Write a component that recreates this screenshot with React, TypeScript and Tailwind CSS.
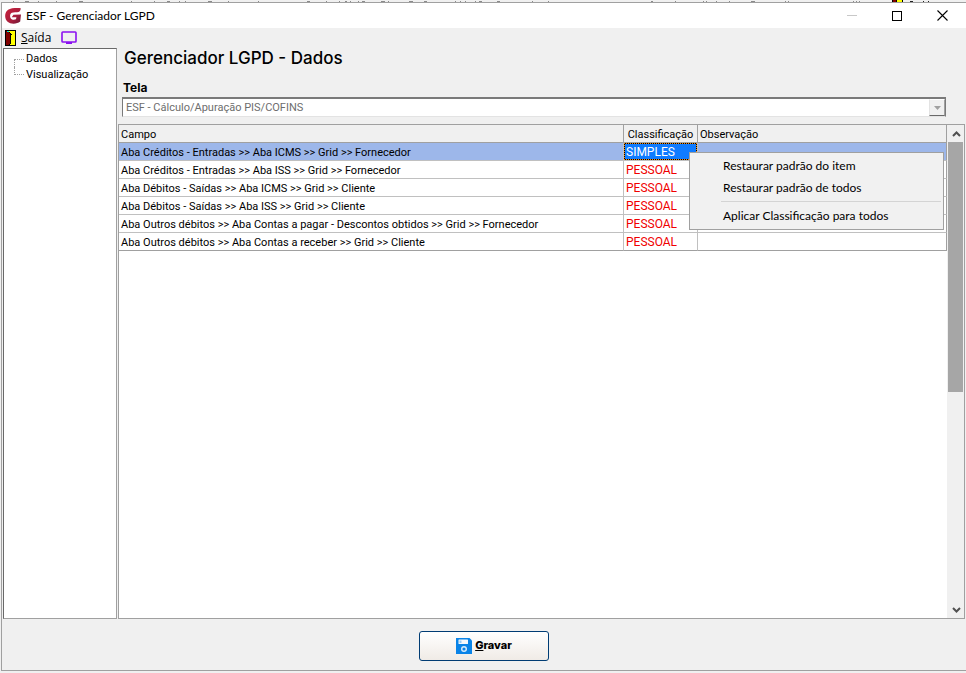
type GridRow = {
  campo: string;
  classificacao: string;
};

const treeItems = ["Dados", "Visualização"];

const rows: GridRow[] = [
  { campo: "Aba Créditos - Entradas >> Aba ICMS >> Grid >> Fornecedor", classificacao: "SIMPLES" },
  { campo: "Aba Créditos - Entradas >> Aba ISS >> Grid >> Fornecedor", classificacao: "PESSOAL" },
  { campo: "Aba Débitos - Saídas >> Aba ICMS >> Grid >> Cliente", classificacao: "PESSOAL" },
  { campo: "Aba Débitos - Saídas >> Aba ISS >> Grid >> Cliente", classificacao: "PESSOAL" },
  { campo: "Aba Outros débitos >> Aba Contas a pagar - Descontos obtidos >> Grid >> Fornecedor", classificacao: "PESSOAL" },
  { campo: "Aba Outros débitos >> Aba Contas a receber >> Grid >> Cliente", classificacao: "PESSOAL" },
];

function AppLogo() {
  return (
    <svg width="16" height="16" viewBox="0 0 16 16" aria-hidden="true">
      <defs>
        <linearGradient id="logo" x1="0" y1="0" x2="1" y2="1">
          <stop offset="0" stopColor="#c8203c" />
          <stop offset="0.6" stopColor="#a81f3d" />
          <stop offset="1" stopColor="#6d1836" />
        </linearGradient>
      </defs>
      <path
        d="M15.8 0.3C9 -0.6 4 0.3 1.8 3C-0.6 6 -0.4 11 2.6 13.8C5.6 16.6 12 16.3 15.2 13.6L16 6.6L8.4 6.8L6.8 9.3H11.4L11 11.3C9.2 12.2 6.8 11.9 5.7 10.2C4.6 8.2 5 5.9 6.9 4.8C8.6 4 11.6 4.3 13.6 4C14.9 3.7 15.6 2 15.8 0.3Z"
        fill="url(#logo)"
      />
    </svg>
  );
}

function DoorIcon() {
  return (
    <svg width="11" height="16" viewBox="0 0 11 16" shapeRendering="crispEdges" aria-hidden="true">
      <rect width="11" height="16" fill="#000" />
      <rect x="1" y="1" width="9" height="14" fill="#ff0" />
      <path d="M1 1H3V2H4V3H5V14H4V15H1Z" fill="#800000" />
      <path d="M3 1H4V2H5V3H6V14H5V15H4V14H5V3H4V2H3Z" fill="#000" />
      <rect x="2" y="1" width="2" height="1" fill="#00e5e5" />
      <rect x="6" y="4" width="1" height="1" fill="#000" />
    </svg>
  );
}

function MonitorIcon() {
  return (
    <svg width="16" height="14" viewBox="0 0 16 14" aria-hidden="true">
      <rect x="1" y="1" width="14" height="10" rx="0.8" fill="none" stroke="#8a10f0" strokeWidth="1.6" />
      <path d="M5 11H11V13H5Z" fill="#8a10f0" />
    </svg>
  );
}

function SaveIcon() {
  return (
    <svg width="16" height="16" viewBox="0 0 16 16" aria-hidden="true">
      <path d="M0 0H13.5L16 2.5V16H0Z" fill="#0a84e8" />
      <rect x="2.5" y="1.5" width="9.5" height="4.5" rx="0.5" fill="#f4f8fc" />
      <rect x="3.5" y="2.5" width="2" height="2.5" fill="#9accf4" />
      <circle cx="8" cy="11" r="2.3" fill="none" stroke="#d9ecfb" strokeWidth="1.4" />
    </svg>
  );
}

// sliver of the main window that stays visible above this dialog
function BackgroundStrip() {
  return (
    <div className="h-[2px] overflow-hidden bg-[#f0f0f0]">
      <svg width="966" height="2" viewBox="0 0 966 2" shapeRendering="crispEdges" aria-hidden="true">
        <path
          transform="translate(0 0.5)"
          d="M13 1h1M25 1h4M38 1h1M56 1h1M79 1h4M131 1h1M154 1h1M167 1h3M179 1h1M185 1h1M208 1h4M228 1h1M258 1h1M307 1h3M326 1h1M339 1h1M345 1h2M350 1h1M358 1h1M362 1h3M381 1h4M388 1h1M409 1h4M424 1h3M455 1h1M460 1h1M465 1h1M475 1h1M479 1h3M497 1h3M532 1h1M548 1h1M651 1h2M675 1h1M703 1h1M706 1h1M716 1h1M729 1h1M751 1h4M785 1h1M788 1h1M853 1h1M856 1h1M859 1h1"
          stroke="#8a8a8a"
        />
        <rect x="892" width="11" height="2" fill="#000" />
        <rect x="893" width="3" height="2" fill="#800000" />
        <rect x="897" width="5" height="2" fill="#ff0" />
        <path d="M910 1.5h3M923 1.5h1M928 1.5h1" stroke="#222" />
      </svg>
    </div>
  );
}

function TitleBar() {
  return (
    <header className="flex h-[25px] items-center bg-white pr-px pl-[3px] text-black">
      <AppLogo />
      <h1 className="ml-[5px] flex-1 font-['Lato',sans-serif] text-xs">ESF - Gerenciador LGPD</h1>
      <button type="button" aria-label="Minimizar" disabled className="flex h-full w-[45px] items-center justify-center">
        <span className="h-px w-[10px] bg-[#c8c8c8]" />
      </button>
      <button type="button" aria-label="Maximizar" className="flex h-full w-[45px] items-center justify-center">
        <span className="size-[10px] border border-black" />
      </button>
      <button type="button" aria-label="Fechar" className="flex h-full w-[46px] items-center justify-center">
        <svg width="11" height="11" viewBox="0 0 11 11" aria-hidden="true">
          <path d="M0.5 0.5L10.5 10.5M10.5 0.5L0.5 10.5" stroke="#000" strokeWidth="1.1" />
        </svg>
      </button>
    </header>
  );
}

function TreePanel() {
  return (
    <nav className="w-[114px] shrink-0 border border-[#a0a0a0] border-t-[#696969] border-l-[#696969] bg-white pt-[2px] pl-[10px]">
      <ul className="font-['Roboto',sans-serif] text-[11px] leading-4">
        {treeItems.map((item, index) => (
          <li key={item} className="flex h-4">
            <span className={`flex w-[10px] flex-col border-dotted border-[#a0a0a0] ${index === 0 ? "mt-2 border-t border-l" : "mb-2 border-b border-l"}`} />
            <a href="#" className="pl-[2px]">{item}</a>
          </li>
        ))}
      </ul>
    </nav>
  );
}

function ContextMenu() {
  return (
    <div
      role="menu"
      className="absolute top-[9px] left-[65px] z-10 w-[255px] border border-[#a0a0a0] bg-[#f1f1f1] p-[2px] font-['Lato',sans-serif] text-xs text-black"
    >
      <button type="button" role="menuitem" className="block h-[22px] w-full pl-[31px] text-left">
        Restaurar padrão do item
      </button>
      <button type="button" role="menuitem" className="block h-[22px] w-full pl-[31px] text-left">
        Restaurar padrão de todos
      </button>
      <hr className="mt-[2px] mb-[3px] ml-[29px] border-[#d4d4d4]" />
      <button type="button" role="menuitem" className="block h-[22px] w-full pl-[31px] text-left">
        Aplicar Classificação para todos
      </button>
    </div>
  );
}

function FieldGrid() {
  return (
    <table className="w-full table-fixed border-separate border-spacing-0 font-['Roboto',sans-serif] text-[11px] leading-[15px]">
      <colgroup>
        <col />
        <col className="w-[74px]" />
        <col className="w-[249px]" />
      </colgroup>
      <thead>
        <tr className="bg-[#f0f0f0]">
          <th className="border-r border-b border-[#a0a0a0] p-0 pt-[2px] pl-[2px] text-left font-normal">Campo</th>
          <th className="border-r border-b border-[#a0a0a0] p-0 pt-[2px] text-center font-normal">Classificação</th>
          <th className="border-r border-b border-[#a0a0a0] p-0 pt-[2px] pl-[2px] text-left font-normal">Observação</th>
        </tr>
      </thead>
      <tbody>
        {rows.map((row, index) => {
          const selected = index === 0;
          const line = index === rows.length - 1 ? "border-b-[#a0a0a0]" : "border-b-[#c0c0c0]";
          return (
            <tr key={row.campo} className={selected ? "bg-[#9db7ea]" : "bg-white"}>
              <td className={`truncate border-r border-b border-r-[#c0c0c0] p-0 pt-[2px] pl-[2px] ${line}`}>{row.campo}</td>
              {selected ? (
                <td className={`relative border-r border-b border-r-[#c0c0c0] bg-black p-0 ${line}`}>
                  <div className="border border-dotted border-[#f08a10] bg-[#0f7bff] bg-clip-padding pt-px pl-px text-xs leading-[14px] text-white">
                    {row.classificacao}
                  </div>
                  <ContextMenu />
                </td>
              ) : (
                <td className={`border-r border-b border-r-[#c0c0c0] p-0 pt-[2px] pl-[2px] text-xs leading-[15px] text-[#f00000] ${line}`}>
                  {row.classificacao}
                </td>
              )}
              <td className={`border-r border-b border-r-[#a0a0a0] p-0 ${line}`} />
            </tr>
          );
        })}
      </tbody>
    </table>
  );
}

function ScrollBar() {
  return (
    <div className="flex w-[17px] shrink-0 flex-col bg-[#f0f0f0] pl-px" aria-hidden="true">
      <div className="flex h-[17px] items-center justify-center">
        <svg width="9" height="6" viewBox="0 0 9 6">
          <path d="M1 5L4.5 1.5L8 5" fill="none" stroke="#505050" strokeWidth="2" />
        </svg>
      </div>
      <div className="flex-1">
        <div className="h-[250px] w-[15px] bg-[#a6a6a6]" />
      </div>
      <div className="flex h-[17px] items-center justify-center">
        <svg width="9" height="6" viewBox="0 0 9 6">
          <path d="M1 1L4.5 4.5L8 1" fill="none" stroke="#505050" strokeWidth="2" />
        </svg>
      </div>
    </div>
  );
}

export default function App() {
  return (
    <div className="flex min-h-screen flex-col bg-[#f0f0f0] pb-[2px] font-['Open_Sans',sans-serif] text-black">
      <BackgroundStrip />
      <div className="ml-px flex flex-1 flex-col border-t border-b border-l border-[#a0a0a0]">
        <TitleBar />
        <div className="flex h-5 items-center gap-[10px] pl-[3px] text-xs">
          <button type="button" className="flex items-center gap-[5px]">
            <DoorIcon />
            <span><u>S</u>aída</span>
          </button>
          <button type="button" aria-label="Monitor">
            <MonitorIcon />
          </button>
        </div>

        <div className="flex flex-1 gap-px pr-px pl-px">
          <TreePanel />
          <main className="flex min-w-0 flex-1 flex-col">
            <h2 className="pl-[6px] font-['Inter',sans-serif] text-[17px] leading-5 font-medium">Gerenciador LGPD - Dados</h2>
            <label htmlFor="tela" className="mt-3 pl-[5px] font-['Inter',sans-serif] text-xs leading-4 font-bold">
              Tela
            </label>
            <div className="mt-px mr-[19px] ml-[4px] flex h-5 border border-t-2 border-[#7a7a7a] border-b-[#e3e3e3] bg-white">
              <select
                id="tela"
                disabled
                className="min-w-0 flex-1 appearance-none pt-px pl-[3px] font-['Roboto',sans-serif] text-[11px] leading-4 text-[#6d6d6d] opacity-100"
              >
                <option>ESF - Cálculo/Apuração PIS/COFINS</option>
              </select>
              <span className="flex w-4 items-center justify-center border border-t-white border-r-[#a0a0a0] border-b-[#696969] border-l-[#e3e3e3] bg-[#f0f0f0]">
                <svg width="7" height="4" viewBox="0 0 7 4" aria-hidden="true">
                  <path d="M0 0H7L3.5 4Z" fill="#a0a0a0" />
                </svg>
              </span>
            </div>

            <div className="mt-[7px] flex flex-1 border border-[#a0a0a0] bg-white">
              <div className="min-w-0 flex-1">
                <FieldGrid />
              </div>
              <ScrollBar />
            </div>
          </main>
        </div>

        <footer className="flex h-[51px] items-center justify-center pt-[2px]">
          <button
            type="button"
            className="flex h-[30px] w-[130px] items-center justify-center gap-[3px] rounded-[3px] border border-[#003c74] bg-linear-to-b from-white to-[#f0ebe6] font-['Inter',sans-serif] text-[11px] font-extrabold"
          >
            <SaveIcon />
            <span><u>G</u>ravar</span>
          </button>
        </footer>
      </div>
    </div>
  );
}
